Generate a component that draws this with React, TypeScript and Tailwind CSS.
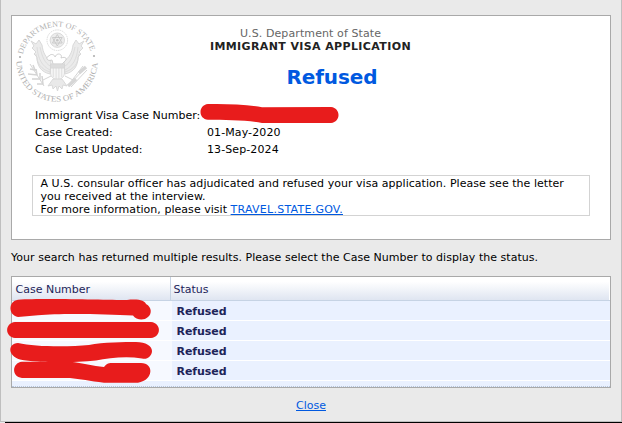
const cases = [
  { id: 1, status: "Refused" },
  { id: 2, status: "Refused" },
  { id: 3, status: "Refused" },
  { id: 4, status: "Refused" },
];

function Seal() {
  return (
    <svg width="86" height="88" viewBox="0 0 86 88" fill="none" stroke="#d6d6d6" strokeWidth=".9" className="shrink-0 overflow-visible">
      <defs>
        <path id="seal-top" d="M9 35.500 A35 35 0 0 1 77 33.700" />
        <path id="seal-bottom" d="M2.3 42 A40.7 40.7 0 0 0 83.7 42" />
      </defs>
      <g fill="#b0b0b0" stroke="none" fontFamily="Liberation Serif, serif">
        <text fontSize="8">
          <textPath href="#seal-top" textLength="91" lengthAdjust="spacingAndGlyphs">DEPARTMENT OF STATE</textPath>
        </text>
        <text fontSize="8">
          <textPath href="#seal-bottom" textLength="126" lengthAdjust="spacingAndGlyphs">UNITED STATES OF AMERICA</textPath>
        </text>
        <circle cx="6" cy="38" r="1.1" />
        <circle cx="80" cy="37" r="1.1" />
      </g>

      {/* glory with the star cluster */}
      <circle cx="43.3" cy="21.2" r="10.3" strokeDasharray="1.5 .8" />
      <circle cx="43.3" cy="21.2" r="7.2" fill="#ececec" />
      <path d="M43.3 15.5 L48.2 24 H38.4 Z M43.3 27 L48.2 18.5 H38.4 Z" stroke="#c4c4c4" strokeWidth=".8" />
      <circle cx="43.3" cy="21.2" r="1.3" fill="#c4c4c4" stroke="none" />

      {/* wings */}
      <path
        d="M37 42 C32 39 29 34 28 26 L25 21 L22 25 L17 22 L20 27 L18 29 L22 33 L20 35 L23 38 C23 47 27 53 36 55 Z"
        fill="#ebebeb"
      />
      <path
        d="M50 42 C55 39 58 34 59 26 L62 21 L65 25 L70 22 L67 27 L69 29 L65 33 L67 35 L64 38 C64 47 60 53 51 55 Z"
        fill="#ebebeb"
      />
      <path d="M23 28 C24 40 28 47 36 51 M26 28 C28 38 31 44 36 47 M22 35 C23 45 27 50 36 53" strokeWidth=".7" />
      <path d="M64 28 C63 40 59 47 51 51 M61 28 C59 38 56 44 51 47 M65 35 C64 45 60 50 51 53" strokeWidth=".7" />

      {/* head, scroll and shield */}
      <path d="M39 45 L38 41 C33 43 31 38 35 37 C37 34 41 36 41 38 C43 33 49 35 47 39 C52 37 54 40 50 43 L48 45" fill="#fff" stroke="#c9c9c9" />
      <path d="M36.5 45 H50.5 V54 C50.5 58 47 60 43.5 61.5 C40 60 36.5 58 36.5 54 Z" fill="#f5f5f5" />
      <path d="M36.5 45 H50.5 V49 H36.5 Z" fill="#dcdcdc" />
      <path d="M39.3 49 V58 M42.1 49 V60 M44.9 49 V60 M47.7 49 V58" strokeWidth=".7" />

      {/* tail */}
      <path d="M39 60 L34 67 L38 66 L39 70 L42 67 L43.5 72 L45 67 L48 70 L49 66 L53 67 L48 60 Z" fill="#e9e9e9" />

      {/* olive branch and arrows */}
      <path d="M16 45 L30 67 M37 57 L29 61" stroke="#cfcfcf" />
      <path d="M16 50 L21 51 L19 46 M14 55 L23 56 L22 50 M18 60 L26 60 L26 54 M23 65 L29 65 L28 57" stroke="#d4d4d4" strokeWidth="1.5" />
      <path d="M51 57 L59 61 M54 67 L71 49 M57 68 L73 51 M56 64 L69 47" stroke="#cfcfcf" />
      <path d="M54 67 L62 60 M65 54 L72 48" stroke="#d6d6d6" strokeWidth="3.5" />
    </svg>
  );
}

function Redactions() {
  return (
    <svg width="622" height="423" fill="#e81c1c" className="absolute left-0 top-0 pointer-events-none">
      <path d="M208 104 C225 103.5 247 104.5 262 107.3 L331 107 C341 108 341 122 331 123 L262 123 C248 120 225 120 208 119.7 C198 119 198 105 208 104 Z" />
      <path d="M18 299.7 C45 298 105 300 127 300 C139 298.5 145 301 146 304 C152 307 152 314 148 317 C144 321 136 320 133 315.500 C105 314 60 313 38 315.2 L18 317 C8 315 8 301 18 299.7 Z" />
      <path d="M15 322 H151 C161.500 323 161.500 337 151 338 H15 C4.500 337 4.500 323 15 322 Z" />
      <path d="M18 343 C35 347 69 347 89 345 C103 342 125 342 136 342 C146 342 152 346 152 351 C152 356 147 360 142 358.500 C126 356 109 358 96 360.500 C72 363 38 363 20 359.500 C8 356 7 344 18 343 Z" />
      <path d="M22 361.800 H70 C83 363 93 366 104 367 C107 363 109 363 113 363 H141 C154 363 154 380 138 382.700 H104 C90 381 80 379 70 378 H22 C11.500 377 11.500 363 22 361.800 Z" />
    </svg>
  );
}

export default function App() {
  return (
    <div className="relative w-[622px] h-[423px] overflow-hidden bg-black font-['Verdana','DejaVu_Sans',sans-serif] text-[11px] leading-[13px] text-black">
      <div className="h-[422px] border border-t-0 border-[#bfbfbf] bg-[#eaeaea] px-[10px] pt-[15px]">
        <section className="h-[225px] border border-[#a9a9a9] bg-white">
          <div className="flex h-[89px]">
            <div className="w-0 pl-[2px] pt-[3px]">
              <Seal />
            </div>
            <header className="flex-1 pt-[11px] pr-[3px] text-center">
              <p className="tracking-[0.1px] text-[#666]">U.S. Department of State</p>
              <h1 className="font-bold tracking-[0.38px] text-[#222]">IMMIGRANT VISA APPLICATION</h1>
              <p className="mt-[11px] pl-[43px] text-[20px] leading-[26px] font-bold tracking-[-0.1px] text-[#0059e0]">Refused</p>
            </header>
          </div>

          <dl className="grid grid-cols-[172px_1fr] auto-rows-[17px] pl-[23px] pt-[2px] leading-[17px]">
            <dt className="whitespace-nowrap">Immigrant Visa Case Number:</dt>
            <dd />
            <dt>Case Created:</dt>
            <dd className="tracking-[0.1px]">01-May-2020</dd>
            <dt>Case Last Updated:</dt>
            <dd className="tracking-[0.1px]">13-Sep-2024</dd>
          </dl>

          <div className="ml-5 mt-[17px] h-[41px] w-[558px] border border-[#d3d3d3] pl-[7.5px] pt-px tracking-[0.035px] whitespace-nowrap">
            A U.S. consular officer has adjudicated and refused your visa application. Please see the letter
            <br />
            you received at the interview.
            <br />
            For more information, please visit{" "}
            <a href="#" className="tracking-[0.25px] text-[#0059e0] underline">TRAVEL.STATE.GOV.</a>
          </div>
        </section>

        <p className="mt-[11px] tracking-[0.032px] whitespace-nowrap">
          Your search has returned multiple results. Please select the Case Number to display the status.
        </p>

        <section className="mt-[12px] h-[112px] border border-[#a9a9a9] bg-[#eaf1ff] text-[#1d2459]">
          <div className="flex h-6 border-b border-[#c6d3e4] bg-linear-to-b from-white from-20% to-[#dfe5f1] leading-[25px]">
            <div className="w-[159px] border-r border-[#c6d3e4] pl-[3.5px]">Case Number</div>
            <div className="flex-1 border-r border-white pl-[2.5px]">Status</div>
          </div>
          {cases.map((c) => (
            <div key={c.id} className="flex h-5 border-b border-white leading-[21px]">
              <div className="w-[160px] bg-[#f6f9ff]" />
              <div className="pl-[4.5px] font-bold tracking-[-0.05px]">{c.status}</div>
            </div>
          ))}
          <div className="h-[6px] border-b border-dotted border-[#b9c8dd]" />
        </section>

        <div className="mt-[11px] text-center">
          <a href="#" className="text-[#0059e0] underline">Close</a>
        </div>
      </div>
      <div className="h-px w-[5px] bg-[#eaeaea]" />
      <Redactions />
    </div>
  );
}
